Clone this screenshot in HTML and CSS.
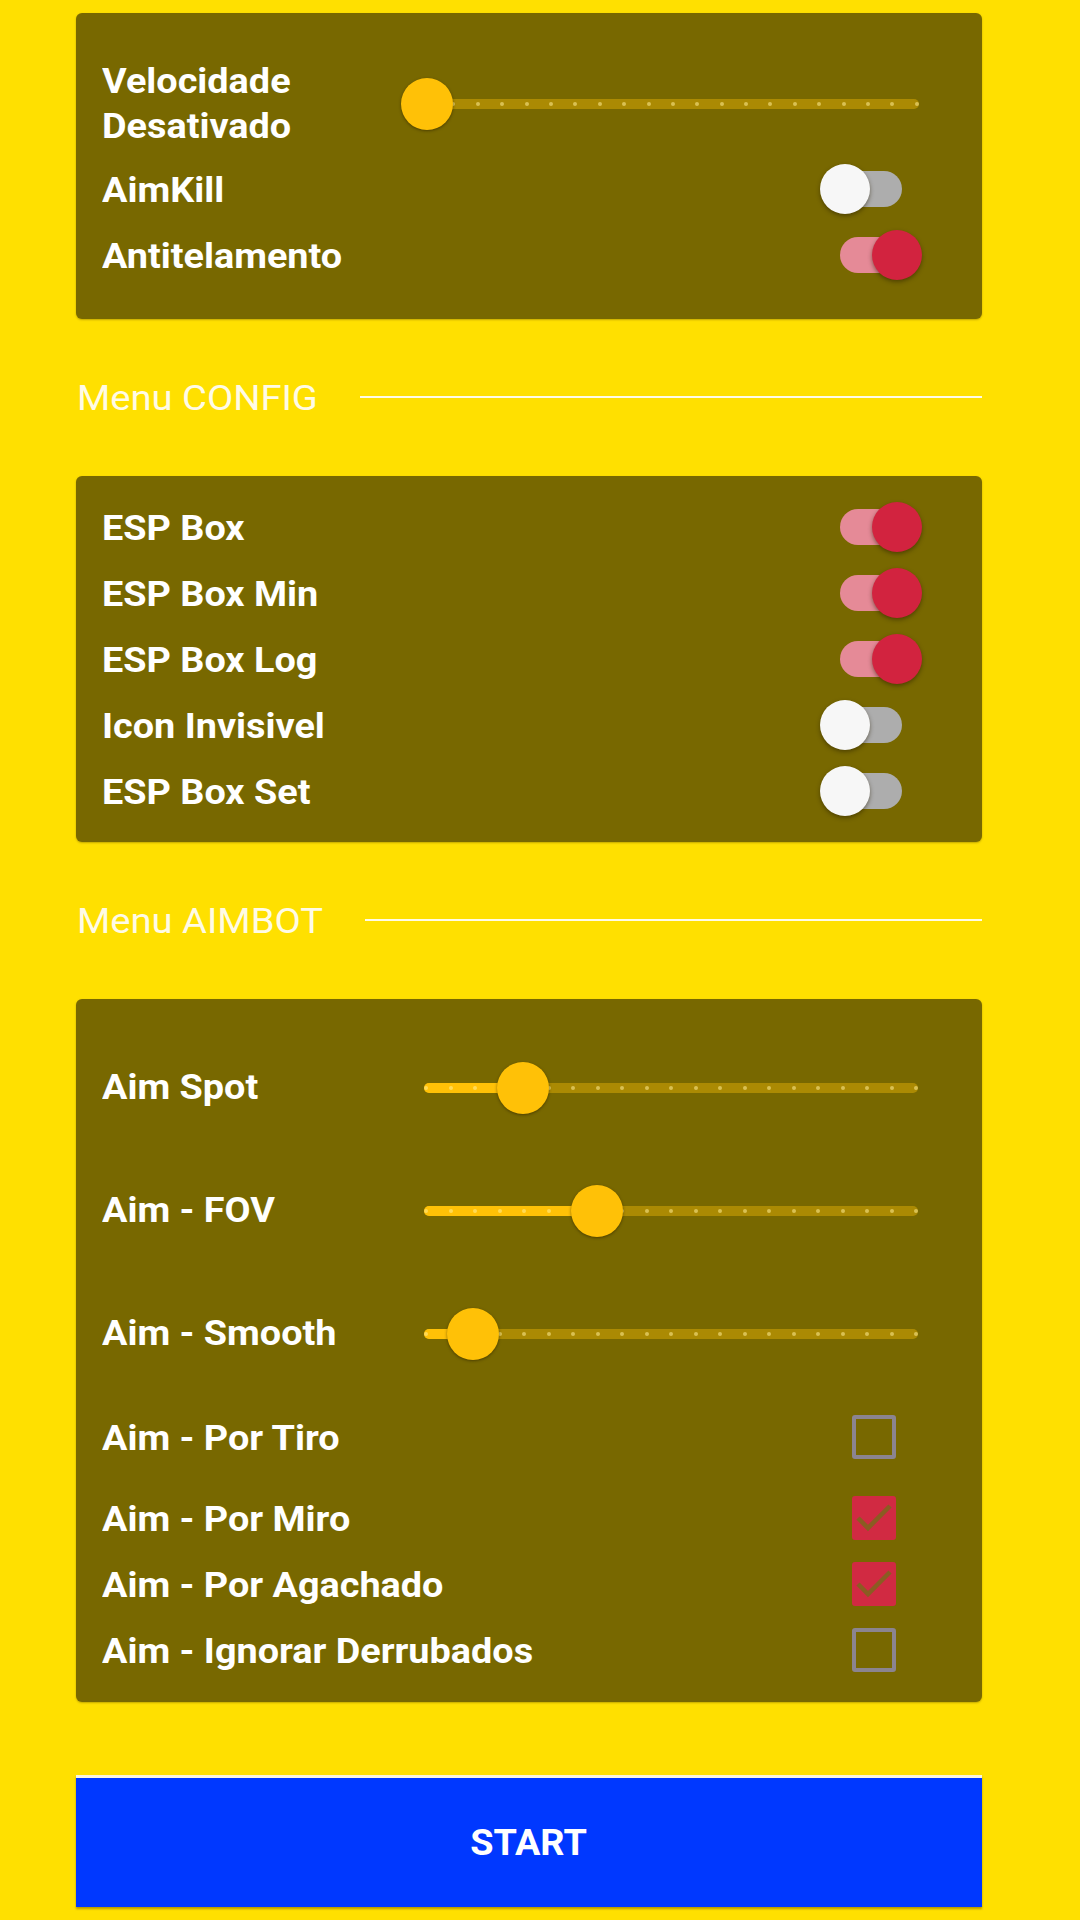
FILE: index.html
```html
<!DOCTYPE html>
<html lang="pt">
<head>
<meta charset="utf-8">
<title>Menu</title>
<link rel="stylesheet" href="styles.css">
</head>
<body>
<main class="page">

  <section class="card card-top">
    <div class="row slider-row slider-row-first">
      <div class="label label-two">Velocidade<br>Desativado</div>
      <div class="slider">
        <div class="track">
          <div class="fill" style="width:0%"></div>
          <div class="ticks"><i></i><i></i><i></i><i></i><i></i><i></i><i></i><i></i><i></i><i></i><i></i><i></i><i></i><i></i><i></i><i></i><i></i><i></i><i></i><i></i><i></i></div>
          <div class="thumb" style="left:0%"></div>
        </div>
      </div>
    </div>
    <div class="row">
      <div class="label">AimKill</div>
      <div class="switch"><span class="sw-track"></span><span class="sw-thumb"></span></div>
    </div>
    <div class="row">
      <div class="label">Antitelamento</div>
      <div class="switch on"><span class="sw-track"></span><span class="sw-thumb"></span></div>
    </div>
  </section>

  <div class="section-head"><span class="section-title">Menu CONFIG</span><span class="section-line"></span></div>

  <section class="card card-config">
    <div class="row"><div class="label">ESP Box</div><div class="switch on"><span class="sw-track"></span><span class="sw-thumb"></span></div></div>
    <div class="row"><div class="label">ESP Box Min</div><div class="switch on"><span class="sw-track"></span><span class="sw-thumb"></span></div></div>
    <div class="row"><div class="label">ESP Box Log</div><div class="switch on"><span class="sw-track"></span><span class="sw-thumb"></span></div></div>
    <div class="row"><div class="label">Icon Invisivel</div><div class="switch"><span class="sw-track"></span><span class="sw-thumb"></span></div></div>
    <div class="row"><div class="label">ESP Box Set</div><div class="switch"><span class="sw-track"></span><span class="sw-thumb"></span></div></div>
  </section>

  <div class="section-head"><span class="section-title">Menu AIMBOT</span><span class="section-line"></span></div>

  <section class="card card-aim">
    <div class="row slider-row">
      <div class="label">Aim Spot</div>
      <div class="slider">
        <div class="track">
          <div class="fill" style="width:20%"></div>
          <div class="ticks"><i></i><i></i><i></i><i></i><i></i><i></i><i></i><i></i><i></i><i></i><i></i><i></i><i></i><i></i><i></i><i></i><i></i><i></i><i></i><i></i><i></i></div>
          <div class="thumb" style="left:20%"></div>
        </div>
      </div>
    </div>
    <div class="row slider-row">
      <div class="label">Aim - FOV</div>
      <div class="slider">
        <div class="track">
          <div class="fill" style="width:35%"></div>
          <div class="ticks"><i></i><i></i><i></i><i></i><i></i><i></i><i></i><i></i><i></i><i></i><i></i><i></i><i></i><i></i><i></i><i></i><i></i><i></i><i></i><i></i><i></i></div>
          <div class="thumb" style="left:35%"></div>
        </div>
      </div>
    </div>
    <div class="row slider-row">
      <div class="label">Aim - Smooth</div>
      <div class="slider">
        <div class="track">
          <div class="fill" style="width:10%"></div>
          <div class="ticks"><i></i><i></i><i></i><i></i><i></i><i></i><i></i><i></i><i></i><i></i><i></i><i></i><i></i><i></i><i></i><i></i><i></i><i></i><i></i><i></i><i></i></div>
          <div class="thumb" style="left:10%"></div>
        </div>
      </div>
    </div>
    <div class="row check-row check-row-first">
      <div class="label">Aim - Por Tiro</div>
      <span class="checkbox"></span>
    </div>
    <div class="row check-row">
      <div class="label">Aim - Por Miro</div>
      <span class="checkbox checked"><svg viewBox="0 0 44 44" width="44" height="44"><polyline points="6,22 16,32 38,10" fill="none" stroke="#8a5c22" stroke-width="4.5"/></svg></span>
    </div>
    <div class="row check-row">
      <div class="label">Aim - Por Agachado</div>
      <span class="checkbox checked"><svg viewBox="0 0 44 44" width="44" height="44"><polyline points="6,22 16,32 38,10" fill="none" stroke="#8a5c22" stroke-width="4.5"/></svg></span>
    </div>
    <div class="row check-row">
      <div class="label">Aim - Ignorar Derrubados</div>
      <span class="checkbox"></span>
    </div>
  </section>

  <button class="start" type="button"><span class="start-text">START</span></button>
</main>
</body>
</html>
```

FILE: styles.css
```css
html, body {
  margin: 0;
  padding: 0;
}
body {
  background: #ffe000;
  font-family: Roboto, "Noto Sans", "Liberation Sans", sans-serif;
  width: 1080px;
  height: 1920px;
  overflow: hidden;
}
.page {
  padding: 13px 98px 0 76px;
  display: flex;
  flex-direction: column;
}

.card {
  background: #786800;
  border-radius: 6px;
  padding: 0 60px 0 26px;
  display: flex;
  flex-direction: column;
  box-shadow: 0 1px 2px rgba(80, 60, 0, 0.35);
}
.card-top {
  padding-top: 46px;
  padding-bottom: 30px;
}
.card-config {
  padding-top: 19px;
  padding-bottom: 17px;
}
.card-aim {
  padding-top: 27px;
  padding-bottom: 18px;
}

.row {
  height: 66px;
  display: flex;
  align-items: center;
  justify-content: space-between;
}
.label {
  color: #ffffff;
  font-size: 35px;
  font-weight: 700;
  line-height: 45px;
  white-space: nowrap;
  transform: scaleX(1.08);
  transform-origin: left center;
}

/* sliders */
.slider-row {
  height: 123px;
  justify-content: flex-start;
}
.slider-row-first {
  height: 90px;
  margin-bottom: 8px;
}
.slider-row .label {
  width: 296px;
  flex: 0 0 296px;
}
.slider {
  flex: 1;
  padding: 0 4px 0 26px;
}
.slider-row-first .slider {
  padding-left: 29px;
  padding-right: 3px;
}
.track {
  position: relative;
  height: 10px;
  border-radius: 5px;
  background: #ab8a03;
}
.fill {
  position: absolute;
  left: 0;
  top: 0;
  bottom: 0;
  background: #ffc107;
  border-radius: 5px;
}
.ticks {
  position: absolute;
  left: 0;
  right: 0;
  top: 3px;
  display: flex;
  justify-content: space-between;
}
.ticks i {
  width: 4px;
  height: 4px;
  border-radius: 50%;
  background: rgba(255, 236, 150, 0.55);
}
.thumb {
  position: absolute;
  top: -21px;
  width: 52px;
  height: 52px;
  margin-left: -26px;
  border-radius: 50%;
  background: #ffc107;
  box-shadow: 0 1px 3px rgba(40, 30, 0, 0.55);
}

/* switches */
.switch {
  position: relative;
  width: 102px;
  height: 50px;
  flex: 0 0 102px;
  margin-top: -3px;
}
.sw-track {
  position: absolute;
  left: 20px;
  top: 7px;
  width: 62px;
  height: 36px;
  border-radius: 18px;
  background: #adadad;
}
.sw-thumb {
  position: absolute;
  left: 0;
  top: 0;
  width: 50px;
  height: 50px;
  border-radius: 50%;
  background: #f7f7f7;
  box-shadow: 0 2px 4px rgba(40, 30, 0, 0.5);
}
.switch.on .sw-track {
  background: #e58a97;
}
.switch.on .sw-thumb {
  left: 52px;
  background: #d2233f;
}

/* checkboxes */
.check-row-first {
  margin-top: 10px;
  margin-bottom: 15px;
}
.checkbox {
  box-sizing: border-box;
  width: 44px;
  height: 44px;
  margin-right: 26px;
  border: 4px solid #8b8490;
  border-radius: 3px;
  flex: 0 0 44px;
  margin-top: -2px;
  position: relative;
}
.checkbox.checked {
  border-color: #d12a42;
  background: #d12a42;
}
.checkbox svg {
  position: absolute;
  left: -4px;
  top: -4px;
}

/* section headers */
.section-head {
  display: flex;
  align-items: center;
  gap: 62px;
  margin: 57px 0 55px 1px;
  height: 45px;
}
.section-title {
  color: #fffbe6;
  font-size: 35px;
  font-weight: 400;
  line-height: 45px;
  white-space: nowrap;
  transform: scaleX(1.09);
  transform-origin: left center;
}
.section-line {
  flex: 1;
  height: 2px;
  background: #fffbe6;
  margin-top: -3px;
}

/* start button */
.start {
  margin-top: 73px;
  height: 132px;
  border: none;
  border-top: 3px solid #fbf6dc;
  background: #0038ff;
  color: #ffffff;
  font-family: Roboto, "Noto Sans", "Liberation Sans", sans-serif;
  font-size: 36px;
  font-weight: 700;
  padding: 0;
  box-shadow: 0 2px 2px rgba(90, 70, 0, 0.45);
}
.start-text {
  display: inline-block;
  transform: scaleX(1.05);
}
```
